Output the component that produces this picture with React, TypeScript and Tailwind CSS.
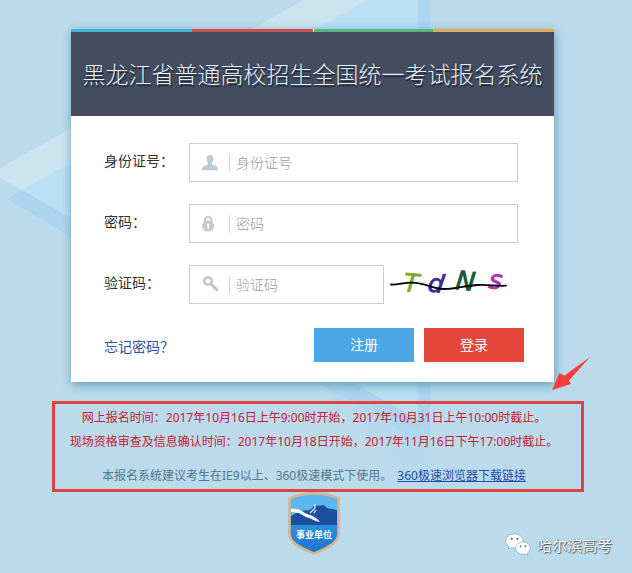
import { FC, ReactNode } from "react";

const UserIcon: FC = () => (
  <svg width="18" height="18" viewBox="0 0 18 18" fill="#bccbd8">
    <path d="M8 1c2.300 0 3.500 1.600 3.400 3.700 0 1.500-.5 2.900-1.400 3.700-.4.500-.4 1.700 0 2.200.7.700 4.400 1.300 5.400 2.700.5.700.6 2.200.6 2.900H-.1c0-.7.1-2.200.6-2.900 1-1.400 4.700-2 5.400-2.700.4-.5.400-1.700 0-2.200-.9-.8-1.400-2.200-1.400-3.700C4.500 2.600 5.700 1 8 1z" />
  </svg>
);

const LockIcon: FC = () => (
  <svg width="18" height="18" viewBox="0 0 18 18">
    <path d="M3 8V5a3.200 3.200 0 0 1 6.400 0V8" fill="none" stroke="#bccbd8" strokeWidth="2" />
    <ellipse cx="6.200" cy="11" rx="6" ry="5.500" fill="#bccbd8" />
    <path d="M6.200 8.300a1.300 1.300 0 0 1 .8 2.300v2.900H5.400v-2.900a1.300 1.300 0 0 1 .8-2.300z" fill="#fff" />
  </svg>
);

const KeyIcon: FC = () => (
  <svg width="18" height="18" viewBox="0 0 18 18" fill="none" stroke="#c0c8ce">
    <circle cx="6" cy="5" r="3.700" strokeWidth="2.600" />
    <path d="M8.800 7.800l6 6" strokeWidth="3" strokeLinecap="round" />
    <path d="M11.500 12.700l1.700-1.700" strokeWidth="1.500" />
  </svg>
);

// hand-drawn code with the strike line through it
const Captcha: FC = () => (
  <svg
    className="ml-1.5 h-[39px] w-32 shrink-0 font-['DejaVu_Sans','Noto_Sans',sans-serif] italic"
    viewBox="0 0 128 39"
    role="img"
    aria-label="验证码图片"
  >
    <g strokeWidth="0.800">
      <text x="13" y="26" fontSize="25" fill="#86a52c" stroke="#86a52c" transform="rotate(5 13 26)">
        T
      </text>
      <text x="37" y="26" fontSize="25" fill="#3b2a9c" stroke="#3b2a9c" transform="rotate(8 37 26)">
        d
      </text>
      <text x="65" y="24" fontSize="26" fill="#0b5a35" stroke="#0b5a35" transform="rotate(6 65 24)">
        N
      </text>
      <text x="98" y="23" fontSize="26" fill="#b52fb0" stroke="#b52fb0" transform="rotate(6 98 23)">
        s
      </text>
    </g>
    <path
      d="M1 19.500c7 .4 13-2 21-1.800 14 .3 20 5.800 32 6.300 12 .3 20-3.500 34-4 10-.4 20 1.300 28 .7"
      fill="none"
      stroke="#000"
      strokeWidth="1.800"
      strokeLinecap="round"
    />
  </svg>
);

const Shield: FC = () => (
  <svg width="52" height="63" viewBox="0 0 52 63" role="img" aria-label="事业单位">
    <defs>
      <linearGradient id="sky" x1="0" y1="0" x2="0" y2="1">
        <stop offset="0" stopColor="#5ab5f0" />
        <stop offset="0.500" stopColor="#64b8ee" />
        <stop offset="0.520" stopColor="#2b8fdc" />
        <stop offset="1" stopColor="#2173cb" />
      </linearGradient>
    </defs>
    <path
      d="M26 1.500c9 0 18 2 24.500 5v35c0 10-13 15-24.500 20C14.500 56.500 1.500 51.500 1.500 41.500v-35C8 3.500 17 1.500 26 1.500z"
      fill="url(#sky)"
      stroke="#d3b58f"
      strokeWidth="2.600"
    />
    <path d="M3 24l9-5 10-1 5-5 3 1 6-1 3 3 10 2v15H3z" fill="#1c4f9f" />
    <path d="M3 17c6-1 10 1 14 4 5 2 10 3 15 9-6-1-9-4-14-5l-7-4-8-1z" fill="#fff" />
    <path d="M22 21l5-5v-4M26 21l2-3" stroke="#e8f6ff" strokeWidth="1.200" fill="none" />
    <text
      x="26"
      y="46"
      textAnchor="middle"
      fontSize="9"
      fontWeight="700"
      fill="#fff"
      className="font-['Noto_Sans_CJK_SC',sans-serif]"
    >
      事业单位
    </text>
  </svg>
);

const WechatIcon: FC = () => (
  <svg width="26" height="24" viewBox="0 0 26 24">
    <g fill="#fff" stroke="#8a9aa4" strokeWidth="0.600">
      <path d="M9.500 1C4.700 1 1 4 1 7.900c0 2.300 1.200 4.200 3.200 5.500l-.8 2.700 3.100-1.600c1 .3 2 .4 3 .4 4.700 0 8.500-3.100 8.500-7S14.200 1 9.500 1z" />
      <path d="M18 9c-4 0-7.200 2.700-7.200 6.100s3.200 6.100 7.200 6.100c.9 0 1.700-.1 2.500-.4l2.600 1.500-.7-2.300c1.700-1.200 2.700-2.900 2.700-4.900C25.100 11.700 22 9 18 9z" />
    </g>
    <g fill="#5d6d78">
      <circle cx="6.700" cy="5.800" r="1.100" />
      <circle cx="12.400" cy="5.800" r="1.100" />
      <circle cx="15.600" cy="13.200" r="1" />
      <circle cx="20.400" cy="13.200" r="1" />
    </g>
  </svg>
);

const Backdrop: FC = () => (
  <svg
    className="absolute top-0 left-0 -z-10"
    width="632"
    height="573"
    viewBox="0 0 632 573"
    aria-hidden="true"
  >
    <path d="M22 190L368 0h50v422z" fill="#bbdff3" />
    <path d="M0 168L304 0h64L22 190 0 178z" fill="#cce4ef" />
    <path d="M7 199l15-9 396 230V0h12v442l-8 2z" fill="#abd4ef" />
    <path d="M411 430l19-10v60l-9 2-98-92h24z" fill="#b1d7ed" opacity="0.500" />
  </svg>
);

type FieldProps = {
  id: string;
  label: string;
  type?: string;
  icon: ReactNode;
  children?: ReactNode;
};

const Field: FC<FieldProps> = ({ id, label, type = "text", icon, children }) => (
  <div className="mr-1.5 flex items-center">
    <label htmlFor={id} className="w-[85px] shrink-0 pb-1 text-sm text-[#333]">
      {label}：
    </label>
    <div className="flex h-[39px] min-w-0 flex-1 items-center border border-[#ccc] pl-3">
      {icon}
      <span className="ml-[9px] h-[18px] w-px bg-[#d5d5d5]" />
      <input
        id={id}
        type={type}
        placeholder={label}
        className="ml-1.5 min-w-0 flex-1 text-sm text-[#333] outline-none placeholder:font-light placeholder:text-[#999]"
      />
    </div>
    {children}
  </div>
);

const App: FC = () => {
  return (
    <div className="relative isolate min-h-screen overflow-hidden bg-[#bbdbec] pt-[29px] pr-[7px] pb-4 font-['Noto_Sans','Noto_Sans_CJK_SC',sans-serif]">
      <Backdrop />

      <main className="relative mx-auto w-full max-w-[483px] bg-white shadow-[1px_3px_10px_0_#5f9cba]">
        <div className="grid h-[3px] grid-cols-4">
          <span className="bg-[#45b3d8]" />
          <span className="bg-[#c9504f]" />
          <span className="border-l border-white bg-[#58b582]" />
          <span className="bg-[#dfac57]" />
        </div>
        <header className="flex h-[84px] items-center justify-center bg-[#434d5f]">
          <h1 className="text-[23px] font-light whitespace-nowrap text-[#e3edfb] [text-shadow:1px_2px_1px_#1f2735]">
            黑龙江省普通高校招生全国统一考试报名系统
          </h1>
        </header>

        <form
          className="flex flex-col gap-[22px] pt-[27px] pr-[30px] pb-5 pl-[33px]"
          onSubmit={(e) => e.preventDefault()}
        >
          <Field id="idcard" label="身份证号" icon={<UserIcon />} />
          <Field id="password" label="密码" type="password" icon={<LockIcon />} />
          <Field id="code" label="验证码" icon={<KeyIcon />}>
            <Captcha />
          </Field>

          <div className="mt-0.5 flex items-center gap-2.5">
            <a href="#forgot" className="mr-auto pt-1 text-sm text-[#2a56a5]">
              忘记密码？
            </a>
            <button type="button" className="h-[34px] w-[100px] bg-[#4aa6e4] text-sm text-white">
              注册
            </button>
            <button type="submit" className="h-[34px] w-[100px] bg-[#e4463a] text-sm text-white">
              登录
            </button>
          </div>
        </form>

        <svg
          className="absolute -right-9 -bottom-2"
          width="38"
          height="33"
          viewBox="0 0 38 33"
          aria-hidden="true"
        >
          <path d="M0 33L7.500 16l5 2.500L38 0 17 23.500l2 3.500z" fill="#f93d3b" />
        </svg>
      </main>

      <div className="mt-[19px] pl-[11px]">
        <section className="mx-auto w-full max-w-[532px] border-3 border-[#dd4444] pt-0.5 pr-2 pb-px text-center text-xs leading-6">
          <p className="text-[#c8202c]">
            网上报名时间：2017年10月16日上午9:00时开始，2017年10月31日上午10:00时截止。
          </p>
          <p className="text-[#c8202c]">
            现场资格审查及信息确认时间：2017年10月18日开始，2017年11月16日下午17:00时截止。
          </p>
          <p className="mt-2.5 text-[#51788e]">
            本报名系统建议考生在IE9以上、360极速模式下使用。{" "}
            <a href="#browser" className="ml-0.5 text-[#1b50a8] underline">
              360极速浏览器下载链接
            </a>
          </p>
        </section>
      </div>

      <div className="flex justify-center pl-0.5">
        <Shield />
      </div>

      <div className="absolute right-5 bottom-4 flex items-center gap-1.5">
        <WechatIcon />
        <span className="text-[15px] text-white [text-shadow:1px_1px_1px_#4b5d68,0_0_1px_#4b5d68]">
          哈尔滨高考
        </span>
      </div>
    </div>
  );
};

export default App;
